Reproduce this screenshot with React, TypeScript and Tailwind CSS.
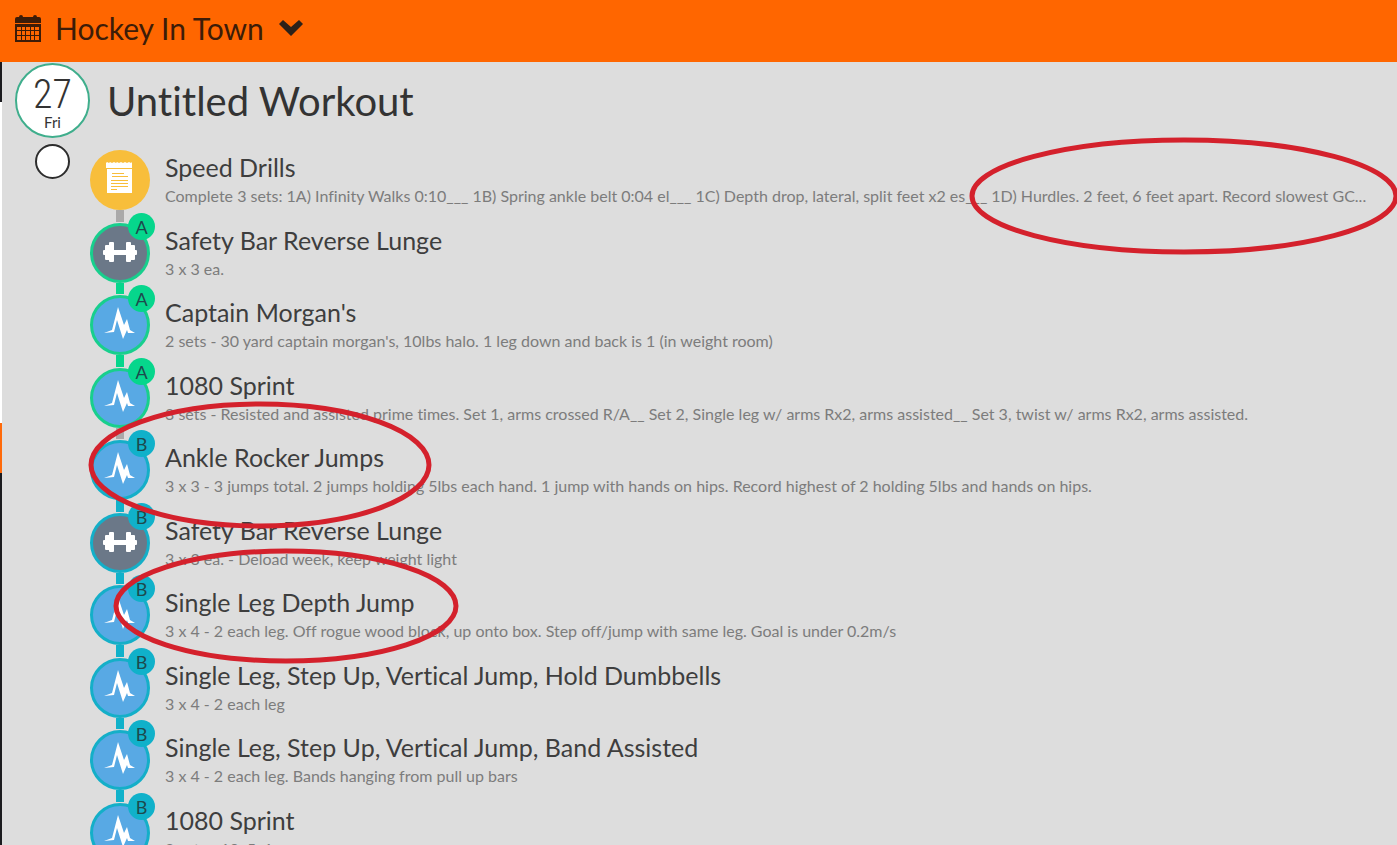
type Kind = "note" | "lift" | "sprint";
type Group = "A" | "B";

interface Exercise {
  title: string;
  details: string;
  kind: Kind;
  group?: Group;
}

const exercises: Exercise[] = [
  {
    title: "Speed Drills",
    details:
      "Complete 3 sets: 1A) Infinity Walks 0:10___ 1B) Spring ankle belt 0:04 el___ 1C) Depth drop, lateral, split feet x2 es___ 1D) Hurdles. 2 feet, 6 feet apart. Record slowest GC...",
    kind: "note",
  },
  { title: "Safety Bar Reverse Lunge", details: "3 x 3 ea.", kind: "lift", group: "A" },
  {
    title: "Captain Morgan's",
    details: "2 sets - 30 yard captain morgan's, 10lbs halo. 1 leg down and back is 1 (in weight room)",
    kind: "sprint",
    group: "A",
  },
  {
    title: "1080 Sprint",
    details:
      "3 sets - Resisted and assisted prime times. Set 1, arms crossed R/A__ Set 2, Single leg w/ arms Rx2, arms assisted__ Set 3, twist w/ arms Rx2, arms assisted.",
    kind: "sprint",
    group: "A",
  },
  {
    title: "Ankle Rocker Jumps",
    details:
      "3 x 3 - 3 jumps total. 2 jumps holding 5lbs each hand. 1 jump with hands on hips. Record highest of 2 holding 5lbs and hands on hips.",
    kind: "sprint",
    group: "B",
  },
  { title: "Safety Bar Reverse Lunge", details: "3 x 3 ea. - Deload week, keep weight light", kind: "lift", group: "B" },
  {
    title: "Single Leg Depth Jump",
    details: "3 x 4 - 2 each leg. Off rogue wood block, up onto box. Step off/jump with same leg. Goal is under 0.2m/s",
    kind: "sprint",
    group: "B",
  },
  { title: "Single Leg, Step Up, Vertical Jump, Hold Dumbbells", details: "3 x 4 - 2 each leg", kind: "sprint", group: "B" },
  {
    title: "Single Leg, Step Up, Vertical Jump, Band Assisted",
    details: "3 x 4 - 2 each leg. Bands hanging from pull up bars",
    kind: "sprint",
    group: "B",
  },
  { title: "1080 Sprint", details: "2 sets - 10, 5, 1", kind: "sprint", group: "B" },
];

const circleBg = { note: "bg-[#f8be3b]", lift: "bg-[#6b7888]", sprint: "bg-[#58a9e4]" };
const groupBorder = { A: "border-[#18cf8d]", B: "border-[#14afc8]" };
const groupBg = { A: "bg-[#06d68c]", B: "bg-[#10b1ca]" };

function CalendarIcon() {
  return (
    <svg className="h-[27px] w-[26px]" viewBox="0 0 26 27" fill="#3d1c08" aria-hidden="true">
      <path d="M2 2h2a2 2 0 0 1 4 0h10a2 2 0 0 1 4 0h2q2 0 2 2v4H0V4q0-2 2-2Z" />
      <path fillRule="evenodd" d="M0 9h26v18H0ZM2 12v3h4v-3Zm5 0v3h3v-3Zm4 0v3h4v-3Zm5 0v3h3v-3Zm4 0v3h4v-3ZM2 16v4h4v-4Zm5 0v4h3v-4Zm4 0v4h4v-4Zm5 0v4h3v-4Zm4 0v4h4v-4ZM2 21v4h4v-4Zm5 0v4h3v-4Zm4 0v4h4v-4Zm5 0v4h3v-4Zm4 0v4h4v-4Z" />
    </svg>
  );
}

function KindIcon({ kind }: { kind: Kind }) {
  if (kind === "note") {
    return (
      <svg className="size-[60px] shrink-0" viewBox="0 0 60 60" aria-hidden="true">
        <path fill="#fff" d="M16 18v-5l1-1 2 1 1-1 2 1 2-1 2 1 1-1 2 1 2-1 2 1 2-1 2 1 2-1 2 1 1-1v6ZM17 19h25v24H17Z" />
        <path stroke="#f8be3b" strokeWidth="1" d="M17 18.5h25M22 23.5h12M22 26.5h16M21 30.5h17M21 33.5h17M21 36.5h17M21 39.5h6" />
      </svg>
    );
  }
  if (kind === "lift") {
    return (
      <svg className="size-[60px] shrink-0" viewBox="0 0 60 60" fill="#fff" aria-hidden="true">
        <rect x="20" y="27" width="20" height="5" />
        <rect x="13" y="27" width="4" height="5" rx="1" />
        <rect x="43" y="27" width="4" height="5" rx="1" />
        <rect x="15" y="22" width="5" height="15" rx="1" />
        <rect x="40" y="22" width="5" height="15" rx="1" />
        <rect x="19" y="19" width="5" height="20" rx="1" />
        <rect x="36" y="19" width="5" height="20" rx="1" />
      </svg>
    );
  }
  return (
    <svg className="size-[60px] shrink-0" viewBox="0 0 60 60" fill="#fff" aria-hidden="true">
      <path d="M14 38l8-3 6-23 6 18 3-6 3 11 5 3h-7l-1-3-4 9-6-19-3 12Z" />
    </svg>
  );
}

function ExerciseRow({ exercise, next }: { exercise: Exercise; next?: Exercise }) {
  const { title, details, kind, group } = exercise;
  const joined = group && next?.group === group;

  return (
    <li className="flex h-[73px] gap-[15px] even:h-[72px]">
      <div className="relative flex w-[60px] shrink-0 flex-col items-center">
        <div
          className={`flex size-[60px] shrink-0 items-center justify-center rounded-full ${circleBg[kind]} ${
            group ? `border-3 ${groupBorder[group]}` : ""
          }`}
        >
          <KindIcon kind={kind} />
        </div>
        {next && <div className={`mb-px w-2 flex-1 ${joined ? groupBg[group] : "bg-[#aaa9a9]"}`} />}
        {group && (
          <span
            className={`absolute -top-[10px] left-[38px] flex size-[27px] items-center justify-center rounded-full text-lg text-[#1d4a4d] ${groupBg[group]}`}
          >
            {group}
          </span>
        )}
      </div>
      <div className="min-w-0 flex-1 pt-px">
        <h2 className="truncate text-[25px] leading-8 text-[#3e3e3e]">{title}</h2>
        <p className="truncate text-base leading-[26px] text-[#7c7c7c]">{details}</p>
      </div>
    </li>
  );
}

export default function App() {
  return (
    <div className="relative flex h-screen flex-col overflow-hidden bg-[#dddddd] font-[Lato,sans-serif] [font-variant-ligatures:none]">
      <header className="flex h-[62px] shrink-0 items-center bg-[#ff6600] px-[15px] pb-[6px]">
        <button type="button" className="flex items-center text-[30px] leading-9 text-[#3d1c08]">
          <CalendarIcon />
          <span className="ml-[14px]">Hockey In Town</span>
          <svg className="ml-[15px] h-4 w-6" viewBox="0 0 24 16" fill="#2c2119" aria-hidden="true">
            <path d="M4 0l8 7 8-7 4 4-12 12L0 4Z" />
          </svg>
        </button>
      </header>

      <div className="flex min-h-0 flex-1">
        {/* Edge of the collapsed side menu */}
        <div className="flex w-[2px] shrink-0 flex-col">
          <div className="h-10 bg-[#1b1b1f]" />
          <div className="h-[321px] bg-white" />
          <div className="h-[50px] bg-[#ff6a0a]" />
          <div className="flex-1 bg-[#1b1b1f]" />
        </div>

        <main className="min-w-0 flex-1 overflow-hidden pl-[13px]">
          <div className="flex items-center gap-[17px] pt-px">
            <time className="flex size-[75px] flex-col items-center rounded-full border-2 border-[#3fae8c] bg-white pt-[11px] text-[#333333]">
              <span className="font-['Roboto_Condensed',sans-serif] text-[40px] leading-[38px] font-light">27</span>
              <span className="text-[15px] leading-4">Fri</span>
            </time>
            <h1 className="text-[40px] leading-[48px] text-[#333333]">Untitled Workout</h1>
          </div>

          <div className="flex gap-5 pt-[6px]">
            <input
              type="checkbox"
              aria-label="Mark workout complete"
              className="ml-5 size-[35px] shrink-0 appearance-none rounded-full border-2 border-[#2d2d2d] bg-white"
            />
            <ul className="min-w-0 flex-1 pt-[6px] pr-2">
              {exercises.map((exercise, i) => (
                <ExerciseRow key={i} exercise={exercise} next={exercises[i + 1]} />
              ))}
            </ul>
          </div>
        </main>
      </div>

      {/* Hand-drawn highlights over the list */}
      <svg
        className="pointer-events-none absolute top-0 left-0 h-[845px] w-[1397px]"
        viewBox="0 0 1397 845"
        fill="none"
        stroke="#d4212c"
        strokeWidth="5"
        aria-hidden="true"
      >
        <ellipse cx="1184" cy="196" rx="212" ry="56" />
        <ellipse cx="260" cy="465" rx="169" ry="61" />
        <ellipse cx="286" cy="606" rx="170" ry="55" />
      </svg>
    </div>
  );
}
